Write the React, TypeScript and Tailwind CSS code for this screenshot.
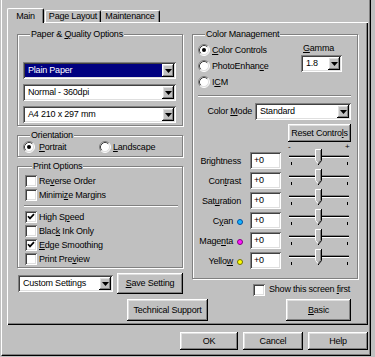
import type { ReactNode } from 'react';

const raised =
  'shadow-[inset_-1px_-1px_0_#000,inset_1px_1px_0_#fff,inset_-2px_-2px_0_#808080,inset_2px_2px_0_#dfdfdf]';
const sunken =
  'shadow-[inset_1px_1px_0_#808080,inset_-1px_-1px_0_#fff,inset_2px_2px_0_#404040,inset_-2px_-2px_0_#dfdfdf]';

function U({ children }: { children: ReactNode }) {
  return <span className="underline underline-offset-[1px]">{children}</span>;
}

function Button({ className = '', children }: { className?: string; children: ReactNode }) {
  return (
    <div className={`flex shrink-0 items-center justify-center bg-[#c0c0c0] ${raised} ${className}`}>
      {children}
    </div>
  );
}

function Select({ value, className = '', selected }: { value: string; className?: string; selected?: boolean }) {
  return (
    <div className={`flex h-[17px] shrink-0 bg-white p-[2px] ${sunken} ${className}`}>
      <div className={`flex flex-1 items-center pl-[3px] ${selected ? 'bg-[#000080] text-white' : ''}`}>{value}</div>
      <div className={`flex w-[12px] items-center justify-center bg-[#c0c0c0] ${raised}`}>
        <svg width="7" height="4" viewBox="0 0 7 4">
          <path d="M0 0h7L3.5 4z" fill="#000" />
        </svg>
      </div>
    </div>
  );
}

function Checkbox({ checked }: { checked?: boolean }) {
  return (
    <div className={`h-[12px] w-[12px] shrink-0 bg-white ${sunken}`}>
      {checked && (
        <svg width="12" height="12" viewBox="0 0 12 12">
          <path d="M3 5.2 L5 7.4 L9 3.2" stroke="#000" strokeWidth="1.7" fill="none" />
        </svg>
      )}
    </div>
  );
}

function Radio({ checked }: { checked?: boolean }) {
  return (
    <svg width="12" height="12" viewBox="0 0 12 12" className="shrink-0">
      <circle cx="6" cy="6" r="5" fill="#fff" />
      <path d="M2.11 9.89 A5.5 5.5 0 0 1 9.89 2.11" stroke="#808080" fill="none" />
      <path d="M2.82 9.18 A4.5 4.5 0 0 1 9.18 2.82" stroke="#404040" fill="none" />
      <path d="M9.89 2.11 A5.5 5.5 0 0 1 2.11 9.89" stroke="#fff" fill="none" />
      <path d="M9.18 2.82 A4.5 4.5 0 0 1 2.82 9.18" stroke="#dfdfdf" fill="none" />
      {checked && <circle cx="6" cy="6" r="2" fill="#000" />}
    </svg>
  );
}

function Group({ legend, className = '', children }: { legend: ReactNode; className?: string; children: ReactNode }) {
  return (
    <fieldset className={`border border-[#808080] shadow-[inset_1px_1px_0_#fff,1px_1px_0_#fff] ${className}`}>
      <legend className="ml-[7px] bg-[#c0c0c0] px-px leading-[11px]">{legend}</legend>
      {children}
    </fieldset>
  );
}

function Separator({ className = '' }: { className?: string }) {
  return <div className={`h-[2px] border-t border-t-[#808080] border-b border-b-white ${className}`} />;
}

function CheckRow({ checked, children }: { checked?: boolean; children: ReactNode }) {
  return (
    <div className="flex h-[14px] items-center gap-[2px]">
      <Checkbox checked={checked} />
      <span>{children}</span>
    </div>
  );
}

function Slider() {
  return (
    <div className="relative h-[17px] w-[60px]">
      <div className="absolute left-0 right-0 top-[3px] h-[3px] border-t border-t-[#808080] border-b border-b-white bg-black" />
      <div className="absolute left-[2px] top-[10px] h-[3px] w-px bg-black" />
      <div className="absolute left-[29px] top-[10px] h-[3px] w-px bg-black" />
      <div className="absolute left-[58px] top-[10px] h-[3px] w-px bg-black" />
      <svg width="7" height="16" viewBox="0 0 7 16" className="absolute left-[26px] top-[-3px]">
        <path d="M0.5 0.5 H6.5 V11.5 L3.5 15 L0.5 11.5 Z" fill="#c0c0c0" />
        <path d="M0.5 11.5 V0.5 H6" stroke="#fff" fill="none" />
        <path d="M0.8 11.8 L3.2 14.6" stroke="#fff" fill="none" />
        <path d="M6.5 0 V11.6 L3.5 15.2" stroke="#000" fill="none" />
        <path d="M5.5 1 V11.2 L3.5 13.6" stroke="#808080" fill="none" />
      </svg>
    </div>
  );
}

const sliders: { label: ReactNode; dot?: string }[] = [
  { label: <>Bri<U>g</U>htness</> },
  { label: <>Con<U>t</U>rast</> },
  { label: <>Sat<U>u</U>ration</> },
  { label: <>C<U>y</U>an</>, dot: 'bg-[#19b5ff] border-[#0050a0]' },
  { label: <>Mage<U>n</U>ta</>, dot: 'bg-[#ff19ff] border-[#800080]' },
  { label: <>Yello<U>w</U></>, dot: 'bg-[#ffff00] border-[#707000]' },
];

export default function App() {
  return (
    <div className="h-[357px] w-[375px] overflow-hidden bg-[#c0c0c0] font-['Liberation_Sans',Arial,sans-serif] text-[9px] leading-[11px] tracking-[-0.2px] text-black">
      <div className="ml-[1px] h-[356px] w-[370px] border-l border-l-white border-r border-r-black border-b border-b-black pl-[5px] pt-[7px] shadow-[inset_-1px_-1px_0_#808080]">
        {/* tabs */}
        <div className="flex h-[15px] items-end">
          <div className="relative z-10 -mb-px flex h-[15px] w-[37px] items-center justify-center rounded-t-[2px] border-l border-t border-r border-l-white border-t-white border-r-black bg-[#c0c0c0] shadow-[inset_-1px_0_0_#808080]">
            Main
          </div>
          <div className="ml-px flex h-[12px] w-[56px] items-center justify-center rounded-t-[2px] border-l border-t border-r border-l-white border-t-white border-r-black shadow-[inset_-1px_0_0_#808080]">
            Page Layout
          </div>
          <div className="flex h-[12px] w-[59px] items-center justify-center rounded-t-[2px] border-t border-r border-t-white border-r-black shadow-[inset_-1px_0_0_#808080]">
            Maintenance
          </div>
        </div>

        {/* panel */}
        <div className="flex h-[303px] w-[361px] flex-col bg-[#c0c0c0] pl-[10px] pt-[7px] shadow-[inset_1px_1px_0_#fff,inset_-1px_-1px_0_#000,inset_-2px_-2px_0_#808080]">
          <div className="flex gap-[9px]">
            {/* left column */}
            <div className="flex w-[166px] flex-col">
              <Group legend={<>Paper &amp; <U>Q</U>uality Options</>} className="pb-[2px] pl-[5px] pt-[22px]">
                <div className="flex flex-col gap-[5px]">
                  <Select value="Plain Paper" selected className="w-[153px]" />
                  <Select value="Normal - 360dpi" className="w-[153px]" />
                  <Select value="A4 210 x 297 mm" className="w-[153px]" />
                </div>
              </Group>

              <Group legend="Orientation" className="mt-[4px] pb-[3px] pl-[5px]">
                <div className="flex h-[12px] items-center">
                  <div className="flex w-[76px] items-center gap-[4px]">
                    <Radio checked />
                    <span>
                      <U>P</U>ortrait
                    </span>
                  </div>
                  <div className="flex items-center gap-[2px]">
                    <Radio />
                    <span>
                      <U>L</U>andscape
                    </span>
                  </div>
                </div>
              </Group>

              <Group legend="Print Options" className="mt-[4px] pb-[1px] pl-[7px] pt-[2px]">
                <CheckRow>
                  Re<U>v</U>erse Order
                </CheckRow>
                <CheckRow>
                  Minimi<U>z</U>e Margins
                </CheckRow>
                <Separator className="-ml-px my-[3px] w-[154px]" />
                <CheckRow checked>
                  High S<U>p</U>eed
                </CheckRow>
                <CheckRow>
                  Blac<U>k</U> Ink Only
                </CheckRow>
                <CheckRow checked>
                  <U>E</U>dge Smoothing
                </CheckRow>
                <CheckRow>
                  Print Pre<U>v</U>iew
                </CheckRow>
              </Group>

              <div className="mt-[5px] flex items-center gap-[4px]">
                <Select value="Custom Settings" className="ml-px w-[95px]" />
                <Button className="h-[21px] w-[66px]">
                  <U>S</U>ave Setting
                </Button>
              </div>
            </div>

            {/* right column */}
            <div className="flex w-[166px] flex-col">
              <Group legend="Color Management" className="pb-[6px] pl-[5px] pr-[6px] pt-[2px]">
                <div className="flex">
                  <div className="flex flex-col">
                    <div className="flex h-[16px] items-center gap-[2px]">
                      <Radio checked />
                      <span>
                        <U>C</U>olor Controls
                      </span>
                    </div>
                    <div className="flex h-[16px] items-center gap-[2px]">
                      <Radio />
                      <span>
                        PhotoEnhan<U>c</U>e
                      </span>
                    </div>
                    <div className="flex h-[16px] items-center gap-[2px]">
                      <Radio />
                      <span>
                        I<U>C</U>M
                      </span>
                    </div>
                  </div>
                  <div className="ml-auto mr-[9px] flex w-[41px] flex-col">
                    <div className="flex h-[13px] items-center pl-[2px]">
                      <U>G</U>amma
                    </div>
                    <Select value="1.8" className="w-[41px]" />
                  </div>
                </div>

                <Separator className="mt-[5px]" />

                <div className="mt-[6px] flex items-center justify-end">
                  <span className="mr-[3px]">
                    Color <U>M</U>ode
                  </span>
                  <Select value="Standard" className="w-[96px]" />
                </div>

                <div className="mt-[4px] flex justify-end">
                  <Button className="h-[18px] w-[63px]">
                    Reset Contro<U>l</U>s
                  </Button>
                </div>

                <div className="flex h-[10px] items-center pl-[90px] text-[8px] leading-[6px]">
                  <span className="w-[57px]">-</span>
                  <span>+</span>
                </div>

                {sliders.map((s, i) => (
                  <div key={i} className="flex h-[20px] items-start">
                    <div className="flex h-[17px] w-[47px] items-center justify-end pt-[2px]">
                      <span className={s.dot ? '' : 'pr-[4px]'}>{s.label}</span>
                      {s.dot && <span className={`ml-[4px] mr-[2px] h-[6px] w-[6px] rounded-full border ${s.dot}`} />}
                    </div>
                    <div className={`ml-[5px] flex h-[17px] w-[31px] items-center bg-white pl-[4px] ${sunken}`}>+0</div>
                    <div className="ml-[8px]">
                      <Slider />
                    </div>
                  </div>
                ))}
              </Group>

              <div className="mt-[5px] flex h-[11px] items-center gap-[4px] pl-[61px]">
                <Checkbox />
                <span>
                  Show this screen <U>f</U>irst
                </span>
              </div>
            </div>
          </div>

          <div className="mt-[4px] flex">
            <Button className="ml-[110px] h-[22px] w-[81px]">Technical Support</Button>
            <Button className="ml-[78px] h-[22px] w-[65px]">
              <U>B</U>asic
            </Button>
          </div>
        </div>

        {/* dialog buttons */}
        <div className="mt-[7px] flex gap-[5px] pl-[173px]">
          <Button className="h-[18px] w-[58px]">OK</Button>
          <Button className="h-[18px] w-[60px]">Cancel</Button>
          <Button className="h-[18px] w-[60px]">Help</Button>
        </div>
      </div>
    </div>
  );
}
